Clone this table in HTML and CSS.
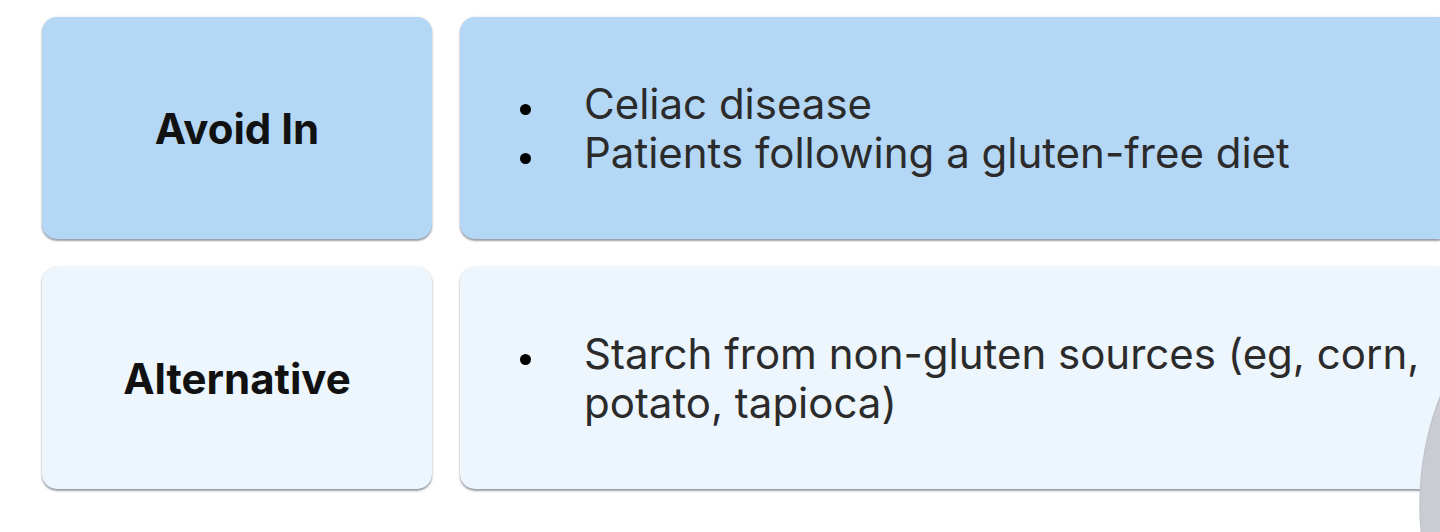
FILE: index.html
```html
<!DOCTYPE html>
<html lang="en">
<head>
<meta charset="utf-8">
<title>Avoid In / Alternative</title>
<link rel="stylesheet" href="styles.css">
</head>
<body>
<main class="table">
  <div class="row row-avoid">
    <div class="cell label">Avoid In</div>
    <div class="cell content">
      <ul class="list">
        <li><span class="dot"></span><span class="txt">Celiac disease</span></li>
        <li><span class="dot"></span><span class="txt">Patients following a gluten-free diet</span></li>
      </ul>
    </div>
  </div>
  <div class="row row-alt">
    <div class="cell label">Alternative</div>
    <div class="cell content">
      <ul class="list">
        <li><span class="dot"></span><span class="txt">Starch from non-gluten sources (eg, corn, potato, tapioca)</span></li>
      </ul>
    </div>
  </div>
</main>
<svg class="fab" width="25" height="160" viewBox="0 0 25 160" aria-hidden="true">
  <defs>
    <linearGradient id="fabg" x1="0" y1="0" x2="1" y2="0">
      <stop offset="0" stop-color="#c9ccd2"/>
      <stop offset="1" stop-color="#dcdee2"/>
    </linearGradient>
  </defs>
  <circle cx="305" cy="133" r="300" fill="url(#fabg)" stroke="#c2c5cb" stroke-width="1.5"/>
</svg>
</body>
</html>
```
FILE: styles.css
```css
html, body {
  margin: 0;
  padding: 0;
  background: #ffffff;
  overflow: hidden;
  height: 532px;
  width: 1440px;
}
body {
  font-family: "Inter", "Liberation Sans", sans-serif;
  font-size: 42px;
  line-height: 49px;
  position: relative;
}
.table {
  display: flex;
  flex-direction: column;
  gap: 28px;
  padding: 17px 0 0 42px;
}
.row {
  display: flex;
  gap: 28px;
  height: 222px;
}
.cell {
  border-radius: 15px;
  box-shadow: 0 2px 2px rgba(40, 50, 70, 0.45), 0 0 3px rgba(0, 0, 0, 0.10);
  display: flex;
  align-items: center;
}
.row-avoid .cell { background: #b4d7f5; }
.row-alt .cell { background: #edf5fd; }
.label {
  width: 390px;
  flex: none;
  justify-content: center;
  font-weight: 700;
  color: #111111;
}
.content {
  flex: 1;
  border-top-right-radius: 0;
  border-bottom-right-radius: 0;
}
.list {
  list-style: none;
  margin: 0;
  padding: 0 0 0 60px;
  width: 920px;
  color: #2b2b2b;
}
.list li {
  display: flex;
  align-items: flex-start;
}
.dot {
  flex: none;
  width: 11px;
  height: 11px;
  border-radius: 50%;
  background: #000000;
  margin: 25px 53px 0 0;
}
.txt { flex: 1; }
.fab {
  position: absolute;
  left: 1415px;
  top: 372px;
  display: block;
}
```
